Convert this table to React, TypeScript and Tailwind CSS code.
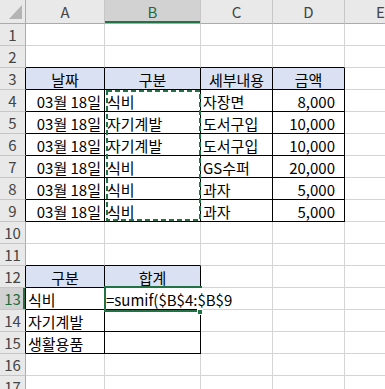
import React from "react";

type Cell = { text: string; align?: "left" | "right" | "center" };

const GREEN = "#217346";

// sheet content, keyed by row number; index 0 = column A
const data: Record<number, Cell[]> = {
  3: [
    { text: "날짜", align: "center" },
    { text: "구분", align: "center" },
    { text: "세부내용", align: "center" },
    { text: "금액", align: "center" },
  ],
  4: [{ text: "03월 18일", align: "right" }, { text: "식비" }, { text: "자장면" }, { text: "8,000", align: "right" }],
  5: [{ text: "03월 18일", align: "right" }, { text: "자기계발" }, { text: "도서구입" }, { text: "10,000", align: "right" }],
  6: [{ text: "03월 18일", align: "right" }, { text: "자기계발" }, { text: "도서구입" }, { text: "10,000", align: "right" }],
  7: [{ text: "03월 18일", align: "right" }, { text: "식비" }, { text: "GS수퍼" }, { text: "20,000", align: "right" }],
  8: [{ text: "03월 18일", align: "right" }, { text: "식비" }, { text: "과자" }, { text: "5,000", align: "right" }],
  9: [{ text: "03월 18일", align: "right" }, { text: "식비" }, { text: "과자" }, { text: "5,000", align: "right" }],
  12: [
    { text: "구분", align: "center" },
    { text: "합계", align: "center" },
  ],
  13: [{ text: "식비" }],
  14: [{ text: "자기계발" }],
  15: [{ text: "생활용품" }],
};

const LETTERS = ["A", "B", "C", "D", "E"];
const ROWS = Array.from({ length: 17 }, (_, i) => i + 1);

// bordered ranges: A3:D9 and A12:B15
const inTable = (r: number, c: number) =>
  (r >= 3 && r <= 9 && c >= 1 && c <= 4) || (r >= 12 && r <= 15 && c >= 1 && c <= 2);

const isBlueHead = (r: number, c: number) =>
  (r === 3 && c >= 1 && c <= 4) || (r === 12 && c >= 1 && c <= 2);

function ColumnHeader({ letter, selected }: { letter: string; selected: boolean }) {
  return (
    <div
      className={`relative flex items-center justify-center border-r border-b border-r-[#c6c6c6] border-b-[#ababab] ${
        selected ? "bg-[#d2d2d2] text-[#1e6b41]" : "bg-[#e9e9e9] text-[#444]"
      }`}
    >
      {letter}
      {selected && <div className="absolute left-0 right-0 bottom-0 h-[2px] bg-[#217346]" />}
    </div>
  );
}

function RowHeader({ n }: { n: number }) {
  const selected = n === 13;
  return (
    <div
      className={`relative flex items-center justify-center border-r border-b border-b-[#c6c6c6] ${
        inTable(n, 1) ? "border-r-black" : "border-r-[#ababab]"
      } ${selected ? "bg-[#d2d2d2] text-[#1e6b41]" : "bg-[#e9e9e9] text-[#444]"}`}
    >
      {n}
      {selected && <div className="absolute top-0 bottom-0 right-0 w-[2px] bg-[#217346]" />}
    </div>
  );
}

function SheetCell({ r, c }: { r: number; c: number }) {
  const cell = data[r]?.[c - 1];
  const right = inTable(r, c) || inTable(r, c + 1) ? "border-r-black" : "border-r-[#d4d4d4]";
  const bottom = inTable(r, c) || inTable(r + 1, c) ? "border-b-black" : "border-b-[#d4d4d4]";
  const bg = isBlueHead(r, c) ? "bg-[#d9e1f2]" : "bg-white";
  const align =
    cell?.align === "right"
      ? "justify-end pr-[3px]"
      : cell?.align === "center"
      ? "justify-center"
      : "justify-start pl-[2px]";
  const money = c === 4 && cell?.align === "right" ? "pr-[9px]" : "";

  // B13 is being edited: formula text spills over into C13
  if (r === 13 && c === 2) {
    return (
      <div className={`relative z-10 flex items-center border-r border-b ${right} ${bottom} bg-white`}>
        <span className="absolute left-[1px] top-0 h-[21px] flex items-center whitespace-nowrap bg-white pr-[2px] pt-[1px]">
          =sumif($B$4:$B$9
        </span>
      </div>
    );
  }

  return (
    <div className={`flex items-center overflow-hidden whitespace-nowrap pt-[1px] border-r border-b ${right} ${bottom} ${bg} ${align} ${money}`}>
      {cell?.text}
    </div>
  );
}

export default function App() {
  return (
    <div
      className="relative w-[385px] h-[389px] overflow-hidden bg-white text-[15px] leading-none text-black"
      style={{ fontFamily: '"Noto Sans CJK KR", "Noto Sans", sans-serif' }}
    >
      <div className="grid grid-cols-[26px_79px_96px_72px_72px_72px] grid-rows-[24px_repeat(17,22px)] w-[417px]">
        {/* corner */}
        <div className="relative border-r border-b border-r-[#ababab] border-b-[#ababab] bg-[#e9e9e9] flex items-end justify-end pr-[3px] pb-[4px]">
          <svg width="13" height="14" viewBox="0 0 13 14">
            <polygon points="13,0 13,14 0,14" fill="#b4b4b4" />
          </svg>
        </div>
        {LETTERS.map((l) => (
          <ColumnHeader key={l} letter={l} selected={l === "B"} />
        ))}

        {ROWS.map((r) => (
          <React.Fragment key={r}>
            <RowHeader n={r} />
            {LETTERS.map((_, i) => (
              <SheetCell key={i} r={r} c={i + 1} />
            ))}
          </React.Fragment>
        ))}
      </div>

      {/* copy marquee around B4:B9 */}
      <svg className="absolute left-[106px] top-[90px] pointer-events-none" width="95" height="131">
        <rect x="1" y="1" width="93" height="129" fill="none" stroke={GREEN} strokeWidth="2" strokeDasharray="5 3" />
      </svg>

      {/* active cell B13 */}
      <div className="absolute left-[104px] top-[286px] w-[98px] h-[26px] border-2 border-r-0 border-[#217346] z-20 pointer-events-none" />
      <div className="absolute left-[197px] top-[309px] w-[6px] h-[6px] bg-[#217346] border border-white z-30" />
    </div>
  );
}
